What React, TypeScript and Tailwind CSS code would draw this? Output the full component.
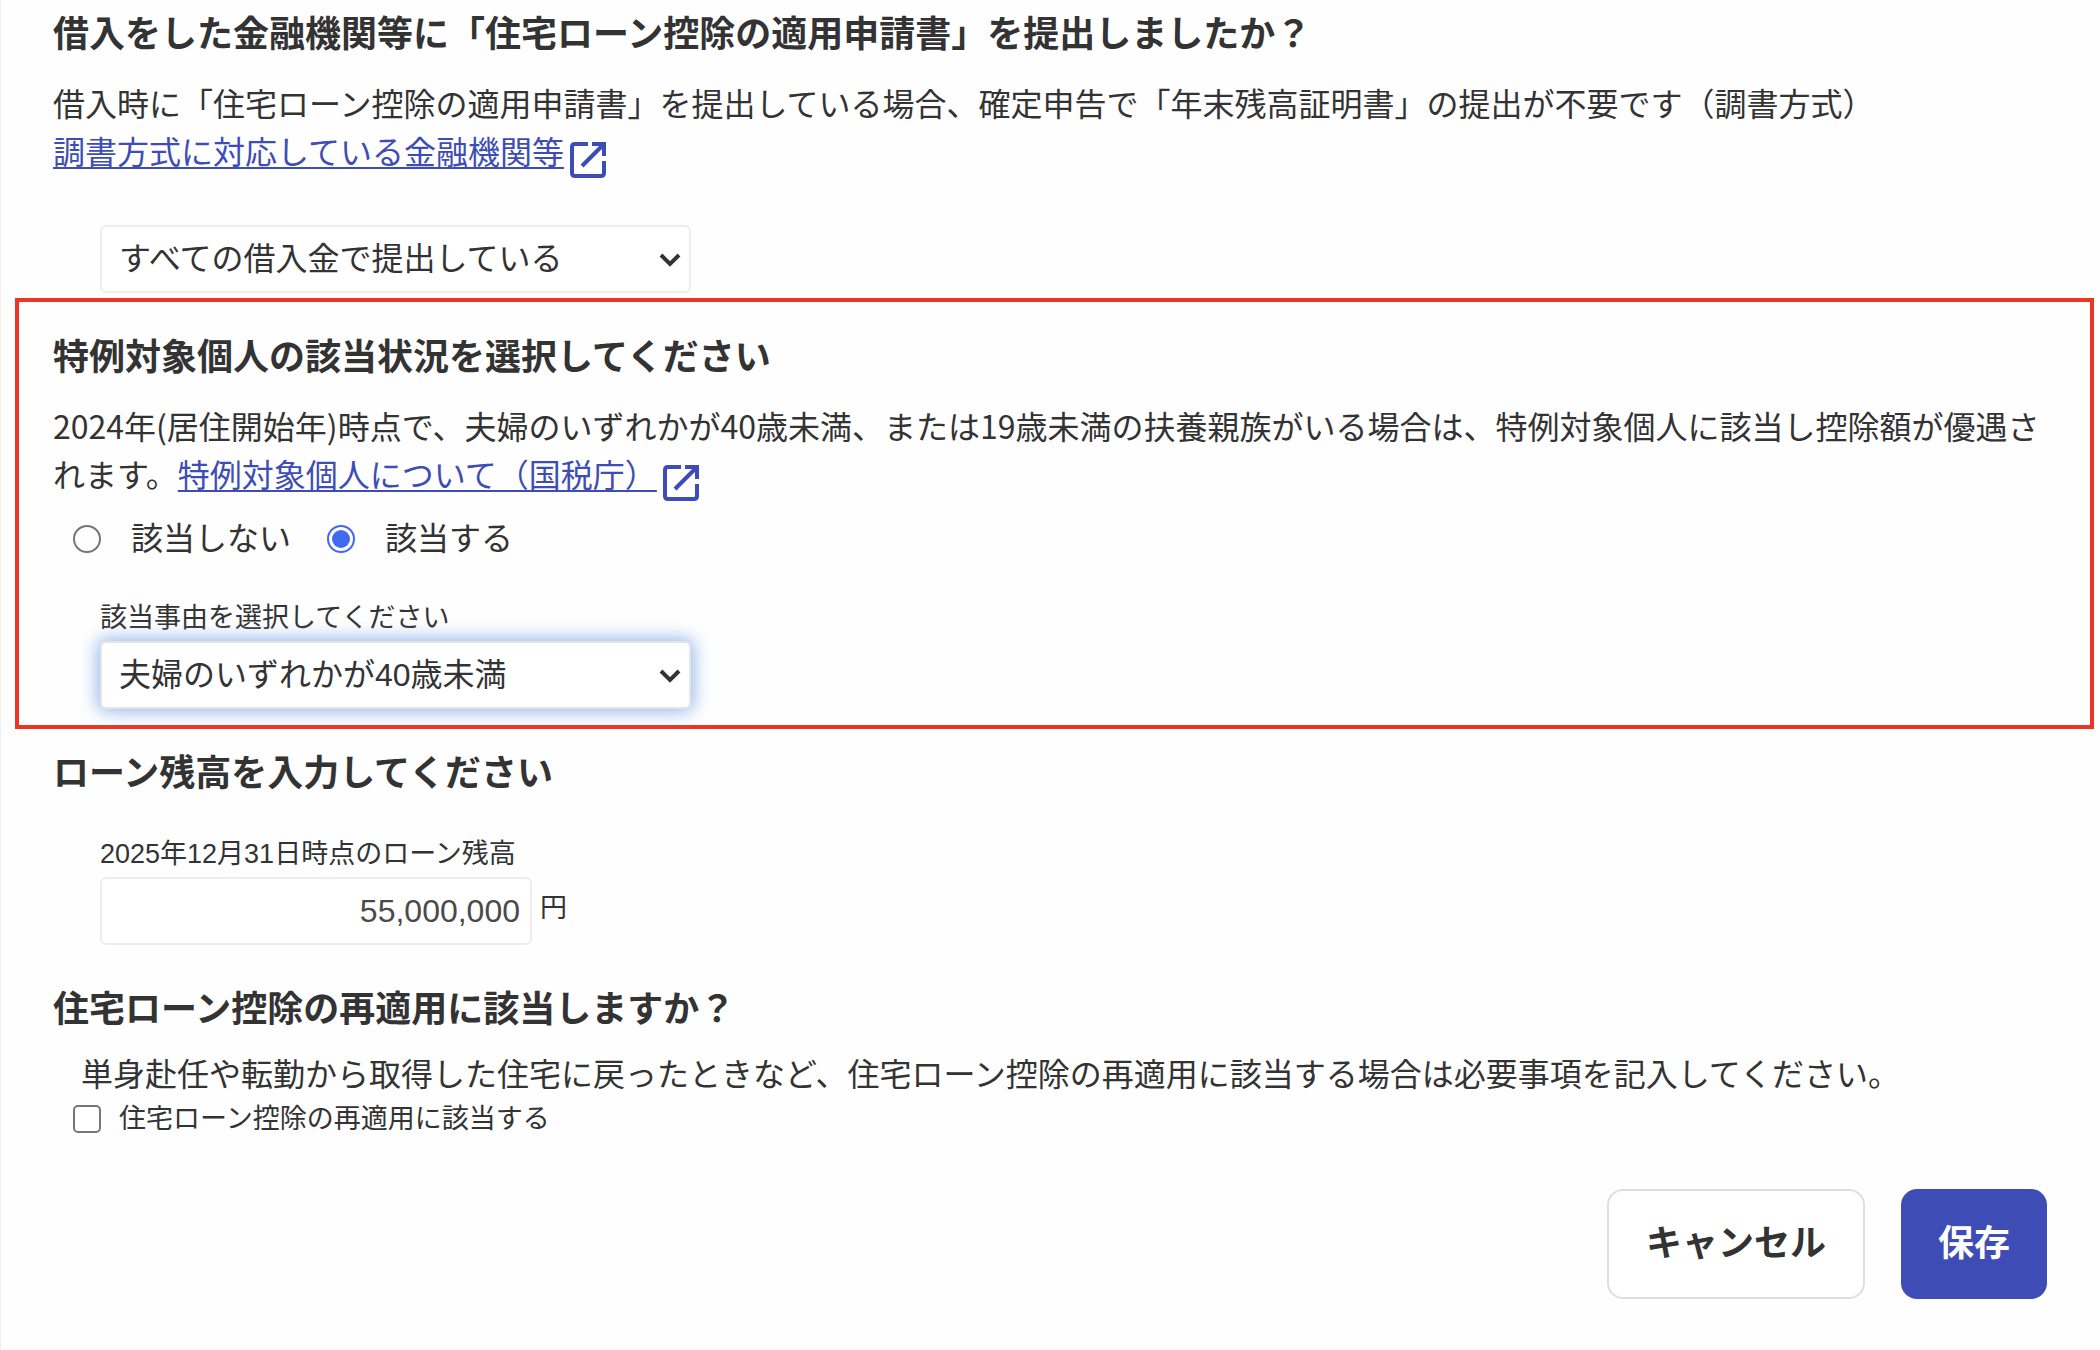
import { useState } from "react";
import type { ReactNode } from "react";

function ExternalIcon() {
  return (
    <svg
      viewBox="0 0 36 36"
      className="ml-1.5 inline-block size-9 align-[-14px]"
      fill="none"
      stroke="currentColor"
      strokeWidth="4"
      aria-hidden="true"
    >
      <path d="M18 2H5Q2 2 2 5V31Q2 34 5 34H31Q34 34 34 31V19" />
      <path d="M12 24L32 4" />
      <path d="M22 2H34V14" />
      <path d="M27 2H34V9Z" fill="currentColor" stroke="none" />
    </svg>
  );
}

function ExternalLink({ children }: { children: ReactNode }) {
  return (
    <a href="#" className="text-[#3d4db5]">
      <span className="underline decoration-2 underline-offset-[3px]">{children}</span>
      <ExternalIcon />
    </a>
  );
}

function Heading({ children }: { children: ReactNode }) {
  return <h2 className="text-4xl leading-[48px] font-bold">{children}</h2>;
}

type SelectProps = { id: string; label?: string; options: string[]; focused?: boolean };

function SelectBox({ id, label, options, focused }: SelectProps) {
  return (
    <div className="relative w-[591px] max-w-full">
      <select
        id={id}
        aria-label={label}
        className={
          focused
            ? "block h-[68px] w-full appearance-none rounded-md border-2 border-[#e6e4e4] bg-white px-[17px] text-[32px] shadow-[0_0_18px_2px_#8db2ea] outline-none"
            : "block h-[68px] w-full appearance-none rounded-md border-2 border-[#efeded] bg-white px-[17px] text-[32px] outline-none"
        }
      >
        {options.map((o) => (
          <option key={o}>{o}</option>
        ))}
      </select>
      <svg
        viewBox="0 0 22 14"
        className="pointer-events-none absolute top-[28px] right-2.5 h-3.5 w-[22px]"
        fill="none"
        stroke="currentColor"
        strokeWidth="4"
        aria-hidden="true"
      >
        <path d="M2 2L11 11L20 2" />
      </svg>
    </div>
  );
}

type RadioProps = { label: string; checked: boolean; onSelect: () => void };

function Radio({ label, checked, onSelect }: RadioProps) {
  return (
    <label className="flex items-center gap-[30px] text-[32px] leading-[48px]">
      <input
        type="radio"
        name="special"
        checked={checked}
        onChange={onSelect}
        className="size-7 shrink-0 appearance-none rounded-full border-2 border-[#767676] bg-clip-content p-[3px] checked:border-[#4169f0] checked:bg-[#4169f0]"
      />
      {label}
    </label>
  );
}

export default function App() {
  const [applies, setApplies] = useState(true);
  const [balance, setBalance] = useState("55,000,000");

  return (
    <main className="min-h-screen border-l border-[#f0f0f0] bg-[#fefefe] pb-12 font-['Liberation_Sans','Noto_Sans_CJK_JP',sans-serif] text-[#333]">
      <section className="pt-[11px] pr-[53px] pl-[52px]">
        <Heading>借入をした金融機関等に「住宅ローン控除の適用申請書」を提出しましたか？</Heading>
        <p className="mt-[22px] text-[32px] leading-[48px]">
          借入時に「住宅ローン控除の適用申請書」を提出している場合、確定申告で「年末残高証明書」の提出が不要です（調書方式）
          <br />
          <ExternalLink>調書方式に対応している金融機関等</ExternalLink>
        </p>
        <div className="mt-[47px] ml-[47px]">
          <SelectBox
            id="submitted"
            label="住宅ローン控除の適用申請書の提出状況"
            options={["すべての借入金で提出している"]}
          />
        </div>
      </section>

      <section className="mt-[5px] mr-[6px] ml-[14px] border-4 border-[#ee3524] pt-8 pr-[43px] pb-4 pl-[34px]">
        <Heading>特例対象個人の該当状況を選択してください</Heading>
        <p className="mt-[19px] font-['Noto_Sans_CJK_JP',sans-serif] text-[32px] leading-[48px]">
          2024年(居住開始年)時点で、夫婦のいずれかが40歳未満、または19歳未満の扶養親族がいる場合は、特例対象個人に該当し控除額が優遇されます。
          <ExternalLink>特例対象個人について（国税庁）</ExternalLink>
        </p>
        <div className="mt-3.5 ml-5 flex gap-9">
          <Radio label="該当しない" checked={!applies} onSelect={() => setApplies(false)} />
          <Radio label="該当する" checked={applies} onSelect={() => setApplies(true)} />
        </div>
        <div className="mt-[35px] ml-[47px]">
          <label htmlFor="reason" className="mb-[3px] block text-[27px] leading-10">
            該当事由を選択してください
          </label>
          <SelectBox id="reason" options={["夫婦のいずれかが40歳未満"]} focused />
        </div>
      </section>

      <section className="pt-[21px] pr-[53px] pl-[52px]">
        <Heading>ローン残高を入力してください</Heading>
        <div className="mt-9 ml-[47px]">
          <label htmlFor="balance" className="mb-[3px] block text-[27px] leading-10">
            2025年12月31日時点のローン残高
          </label>
          <div className="flex items-center gap-2">
            <input
              id="balance"
              type="text"
              value={balance}
              onChange={(e) => setBalance(e.target.value)}
              className="h-[68px] w-[432px] rounded-md border-2 border-[#efeded] bg-white px-2.5 text-right text-[32px] text-[#4a4a4a] outline-none"
            />
            <span className="pb-1.5 text-[27px] leading-10">円</span>
          </div>
        </div>
      </section>

      <section className="pt-[41px] pr-[53px] pl-[52px]">
        <Heading>住宅ローン控除の再適用に該当しますか？</Heading>
        <p className="mt-[17px] pl-7 text-[32px] leading-[48px]">
          単身赴任や転勤から取得した住宅に戻ったときなど、住宅ローン控除の再適用に該当する場合は必要事項を記入してください。
        </p>
        <label className="flex items-center gap-[18px] pl-5 text-[27px] leading-10">
          <input
            type="checkbox"
            className="size-7 shrink-0 appearance-none rounded-[5px] border-2 border-[#767676] bg-white checked:bg-[#4169f0]"
          />
          住宅ローン控除の再適用に該当する
        </label>
        <div className="mt-[50px] flex justify-end gap-9 text-4xl font-bold">
          <button
            type="button"
            className="h-[110px] rounded-2xl border-2 border-[#dedede] bg-white px-[37px]"
          >
            キャンセル
          </button>
          <button type="button" className="h-[110px] rounded-2xl bg-[#3d4db5] px-[37px] text-white">
            保存
          </button>
        </div>
      </section>
    </main>
  );
}
